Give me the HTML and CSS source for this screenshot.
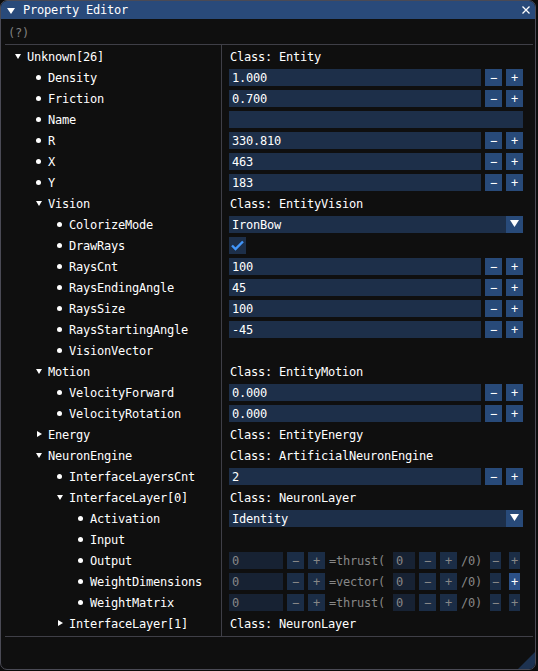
FILE: index.html
```html
<!DOCTYPE html>
<html>
<head>
<meta charset="utf-8">
<link rel="stylesheet" href="styles.css">
</head>
<body>
<div class="window">
  <div class="titlebar">
    <svg class="title-arrow" width="8" height="6" viewBox="0 0 8 6"><polygon points="0,0 8,0 4,6" fill="#fff"/></svg>
    <span class="title-text">Property Editor</span>
    <svg class="close" width="8" height="8" viewBox="0 0 8 8"><path d="M0.5 0.5 L7.5 7.5 M7.5 0.5 L0.5 7.5" stroke="#fff" stroke-width="1.3"/></svg>
  </div>
  <div class="help">(?)</div>
  <div class="table">
    <div class="cell-l l0"><span class="ico"><i class="arr-d"></i></span><span class="lbl">Unknown[26]</span></div>
    <div class="cell-r"><span class="txt">Class: Entity</span></div>

    <div class="cell-l l1"><span class="ico"><i class="bul"></i></span><span class="lbl">Density</span></div>
    <div class="cell-r"><span class="in">1.000</span><span class="btn">−</span><span class="btn">+</span></div>

    <div class="cell-l l1"><span class="ico"><i class="bul"></i></span><span class="lbl">Friction</span></div>
    <div class="cell-r"><span class="in">0.700</span><span class="btn">−</span><span class="btn">+</span></div>

    <div class="cell-l l1"><span class="ico"><i class="bul"></i></span><span class="lbl">Name</span></div>
    <div class="cell-r"><span class="in"></span></div>

    <div class="cell-l l1"><span class="ico"><i class="bul"></i></span><span class="lbl">R</span></div>
    <div class="cell-r"><span class="in">330.810</span><span class="btn">−</span><span class="btn">+</span></div>

    <div class="cell-l l1"><span class="ico"><i class="bul"></i></span><span class="lbl">X</span></div>
    <div class="cell-r"><span class="in">463</span><span class="btn">−</span><span class="btn">+</span></div>

    <div class="cell-l l1"><span class="ico"><i class="bul"></i></span><span class="lbl">Y</span></div>
    <div class="cell-r"><span class="in">183</span><span class="btn">−</span><span class="btn">+</span></div>

    <div class="cell-l l1"><span class="ico"><i class="arr-d"></i></span><span class="lbl">Vision</span></div>
    <div class="cell-r"><span class="txt">Class: EntityVision</span></div>

    <div class="cell-l l2"><span class="ico"><i class="bul"></i></span><span class="lbl">ColorizeMode</span></div>
    <div class="cell-r"><span class="in combo">IronBow</span><span class="combo-btn"><svg width="17" height="17" viewBox="0 0 17 17"><polygon points="4,4 13,4 8.5,11" fill="#fff"/></svg></span></div>

    <div class="cell-l l2"><span class="ico"><i class="bul"></i></span><span class="lbl">DrawRays</span></div>
    <div class="cell-r"><span class="check"><svg width="17" height="17" viewBox="0 0 17 17"><polyline points="3,8.5 6.5,12 14,4.5" fill="none" stroke="#4296fa" stroke-width="2.4"/></svg></span></div>

    <div class="cell-l l2"><span class="ico"><i class="bul"></i></span><span class="lbl">RaysCnt</span></div>
    <div class="cell-r"><span class="in">100</span><span class="btn">−</span><span class="btn">+</span></div>

    <div class="cell-l l2"><span class="ico"><i class="bul"></i></span><span class="lbl">RaysEndingAngle</span></div>
    <div class="cell-r"><span class="in">45</span><span class="btn">−</span><span class="btn">+</span></div>

    <div class="cell-l l2"><span class="ico"><i class="bul"></i></span><span class="lbl">RaysSize</span></div>
    <div class="cell-r"><span class="in">100</span><span class="btn">−</span><span class="btn">+</span></div>

    <div class="cell-l l2"><span class="ico"><i class="bul"></i></span><span class="lbl">RaysStartingAngle</span></div>
    <div class="cell-r"><span class="in">-45</span><span class="btn">−</span><span class="btn">+</span></div>

    <div class="cell-l l2"><span class="ico"><i class="bul"></i></span><span class="lbl">VisionVector</span></div>
    <div class="cell-r"></div>

    <div class="cell-l l1"><span class="ico"><i class="arr-d"></i></span><span class="lbl">Motion</span></div>
    <div class="cell-r"><span class="txt">Class: EntityMotion</span></div>

    <div class="cell-l l2"><span class="ico"><i class="bul"></i></span><span class="lbl">VelocityForward</span></div>
    <div class="cell-r"><span class="in">0.000</span><span class="btn">−</span><span class="btn">+</span></div>

    <div class="cell-l l2"><span class="ico"><i class="bul"></i></span><span class="lbl">VelocityRotation</span></div>
    <div class="cell-r"><span class="in">0.000</span><span class="btn">−</span><span class="btn">+</span></div>

    <div class="cell-l l1"><span class="ico"><i class="arr-r"></i></span><span class="lbl">Energy</span></div>
    <div class="cell-r"><span class="txt">Class: EntityEnergy</span></div>

    <div class="cell-l l1"><span class="ico"><i class="arr-d"></i></span><span class="lbl">NeuronEngine</span></div>
    <div class="cell-r"><span class="txt">Class: ArtificialNeuronEngine</span></div>

    <div class="cell-l l2"><span class="ico"><i class="bul"></i></span><span class="lbl">InterfaceLayersCnt</span></div>
    <div class="cell-r"><span class="in">2</span><span class="btn">−</span><span class="btn">+</span></div>

    <div class="cell-l l2"><span class="ico"><i class="arr-d"></i></span><span class="lbl">InterfaceLayer[0]</span></div>
    <div class="cell-r"><span class="txt">Class: NeuronLayer</span></div>

    <div class="cell-l l3"><span class="ico"><i class="bul"></i></span><span class="lbl">Activation</span></div>
    <div class="cell-r"><span class="in combo">Identity</span><span class="combo-btn"><svg width="17" height="17" viewBox="0 0 17 17"><polygon points="4,4 13,4 8.5,11" fill="#fff"/></svg></span></div>

    <div class="cell-l l3"><span class="ico"><i class="bul"></i></span><span class="lbl">Input</span></div>
    <div class="cell-r"></div>

    <div class="cell-l l3"><span class="ico"><i class="bul"></i></span><span class="lbl">Output</span></div>
    <div class="cell-r dim">
      <span class="din w54">0</span><span class="dbtn">−</span><span class="dbtn">+</span>
      <span class="dtxt w60">=thrust(</span>
      <span class="din w22">0</span><span class="dbtn">−</span><span class="dbtn">+</span>
      <span class="dtxt w25">/0)</span>
      <span class="dbtn sm">−</span><span class="dbtn sm last">+</span>
    </div>

    <div class="cell-l l3"><span class="ico"><i class="bul"></i></span><span class="lbl">WeightDimensions</span></div>
    <div class="cell-r dim">
      <span class="din w54">0</span><span class="dbtn">−</span><span class="dbtn">+</span>
      <span class="dtxt w60">=vector(</span>
      <span class="din w22">0</span><span class="dbtn">−</span><span class="dbtn">+</span>
      <span class="dtxt w25">/0)</span>
      <span class="dbtn sm">−</span><span class="dbtn sm last hover">+</span>
    </div>

    <div class="cell-l l3"><span class="ico"><i class="bul"></i></span><span class="lbl">WeightMatrix</span></div>
    <div class="cell-r dim">
      <span class="din w54">0</span><span class="dbtn">−</span><span class="dbtn">+</span>
      <span class="dtxt w60">=thrust(</span>
      <span class="din w22">0</span><span class="dbtn">−</span><span class="dbtn">+</span>
      <span class="dtxt w25">/0)</span>
      <span class="dbtn sm">−</span><span class="dbtn sm last">+</span>
    </div>

    <div class="cell-l l2"><span class="ico"><i class="arr-r"></i></span><span class="lbl">InterfaceLayer[1]</span></div>
    <div class="cell-r"><span class="txt">Class: NeuronLayer</span></div>
  </div>
  <svg class="grip" width="17" height="17" viewBox="0 0 17 17"><polygon points="17,0 17,17 0,17" fill="#1d3250"/></svg>
</div>
</body>
</html>
```

FILE: styles.css
```css
* { box-sizing: border-box; }

html, body {
  margin: 0;
  padding: 0;
  background: #0c0c0c;
}

body {
  width: 538px;
  height: 671px;
  font-family: "DejaVu Sans Mono", "Liberation Mono", monospace;
  font-size: 12px;
  letter-spacing: -0.225px;
  color: #ffffff;
}

.window {
  position: relative;
  width: 536px;
  height: 670px;
  border: 1px solid #4a4a55;
  border-radius: 7px;
  background: #0f0f0f;
  overflow: hidden;
}

.titlebar {
  height: 18px;
  background: #294a7a;
  display: flex;
  align-items: center;
  padding: 0 5px 0 6px;
}

.title-arrow {
  margin-top: 1px;
  flex: none;
}

.title-text {
  margin-left: 8px;
  line-height: 18px;
  flex: 1;
}

.close {
  flex: none;
  margin-bottom: 1px;
}

.help {
  margin: 8px 0 4px 7px;
  height: 13px;
  line-height: 13px;
  color: #808080;
}

.table {
  margin-left: 4px;
  width: 528px;
  border-top: 1px solid #3f3f47;
  border-bottom: 1px solid #3f3f47;
  display: grid;
  grid-template-columns: 216px 1fr;
  column-gap: 8px;
  row-gap: 4px;
  padding: 3px 10px 4px 0;
  background: linear-gradient(#3f3f47, #3f3f47) 216px 0 / 1px 100% no-repeat;
}

.cell-l, .cell-r {
  height: 17px;
  display: flex;
  align-items: center;
  white-space: nowrap;
}

.l0 { padding-left: 1px; }
.l1 { padding-left: 22px; }
.l2 { padding-left: 43px; }
.l3 { padding-left: 64px; }

.ico {
  width: 21px;
  height: 17px;
  flex: none;
  position: relative;
}

.bul {
  position: absolute;
  left: 9px;
  top: 6px;
  width: 5px;
  height: 5px;
  border-radius: 50%;
  background: #ffffff;
}

.arr-d {
  position: absolute;
  left: 9px;
  top: 6px;
  width: 0;
  height: 0;
  border-left: 3px solid transparent;
  border-right: 3px solid transparent;
  border-top: 5px solid #ffffff;
}

.arr-r {
  position: absolute;
  left: 10px;
  top: 5px;
  width: 0;
  height: 0;
  border-top: 3px solid transparent;
  border-bottom: 3px solid transparent;
  border-left: 5px solid #ffffff;
}

.cell-r {
  gap: 4px;
}

.lbl, .txt, .in, .btn, .din, .dbtn, .dtxt {
  height: 17px;
  padding-top: 1px;
  line-height: 16px;
}

.txt {
  padding-left: 1px;
}

.in {
  flex: 1;
  background: #1d2f49;
  padding-left: 3px;
  overflow: hidden;
}

.btn {
  flex: none;
  width: 17px;
  background: #284a79;
  text-align: center;
  letter-spacing: 0;
}

.combo {
  margin-right: -4px;
}

.combo-btn {
  flex: none;
  width: 17px;
  height: 17px;
  background: #284a79;
  display: flex;
}

.check {
  width: 17px;
  height: 17px;
  background: #1d2f49;
  display: flex;
}

.dim {
  color: #878787;
}

.din {
  flex: none;
  background: #172233;
  padding-left: 3px;
}

.w54 { width: 54px; }
.w22 { width: 22px; }

.dtxt {
  flex: none;
}

.w60 { width: 60px; }
.w25 { width: 25px; }

.dbtn {
  flex: none;
  width: 17px;
  background: #1b2d46;
  text-align: center;
  letter-spacing: 0;
}

.dbtn.sm { width: 11px; }
.dbtn.last { margin-left: 4px; }

.dbtn.hover {
  background: #2b5087;
  color: #ffffff;
}

.grip {
  position: absolute;
  right: 0;
  bottom: 0;
}
```
